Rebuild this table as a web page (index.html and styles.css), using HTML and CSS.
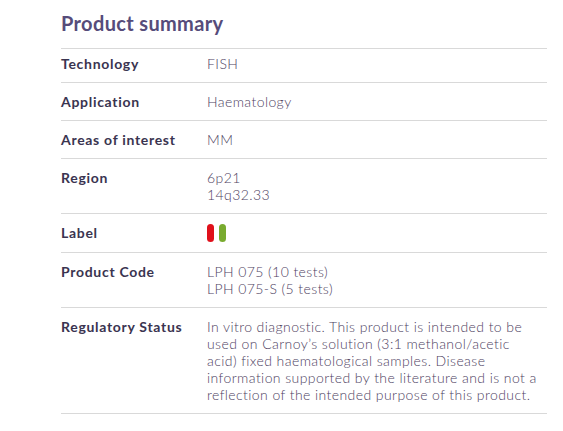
FILE: index.html
```html
<!DOCTYPE html>
<html>
<head>
<meta charset="utf-8">
<link rel="stylesheet" href="styles.css">
</head>
<body>
<section class="summary">
  <h2 class="title">Product summary</h2>
  <div class="table">
    <div class="row first">
      <div class="key">Technology</div>
      <div class="val">FISH</div>
    </div>
    <div class="row">
      <div class="key">Application</div>
      <div class="val">Haematology</div>
    </div>
    <div class="row">
      <div class="key">Areas of interest</div>
      <div class="val">MM</div>
    </div>
    <div class="row">
      <div class="key">Region</div>
      <div class="val">6p21<br>14q32.33</div>
    </div>
    <div class="row">
      <div class="key">Label</div>
      <div class="val pills"><span class="pill red"></span><span class="pill green"></span></div>
    </div>
    <div class="row">
      <div class="key">Product Code</div>
      <div class="val">LPH 075 (10 tests)<br>LPH 075-S (5 tests)</div>
    </div>
    <div class="row">
      <div class="key">Regulatory Status</div>
      <div class="val">In vitro diagnostic. This product is intended to be<br>used on Carnoy’s solution (3:1 methanol/acetic<br>acid) fixed haematological samples. Disease<br>information supported by the literature and is not a<br>reflection of the intended purpose of this product.</div>
    </div>
  </div>
</section>
</body>
</html>
```
FILE: styles.css
```css
html, body {
  margin: 0;
  padding: 0;
  background: #ffffff;
}
body {
  font-family: "Lato", "Open Sans", sans-serif;
}
.summary {
  margin-left: 61px;
  width: 486px;
  padding-top: 10px;
}
.title {
  margin: 0;
  font-size: 20px;
  font-weight: 700;
  letter-spacing: 0.35px;
  color: #564c7a;
  line-height: 26px;
  padding-bottom: 12px;
  border-bottom: 1px solid #d9d9d9;
}
.row {
  display: grid;
  grid-template-columns: 146px 1fr;
  padding: 10px 0 10px;
  border-bottom: 1px solid #d9d9d9;
  font-size: 14px;
  line-height: 17px;
}
.row.first {
  padding-top: 6px;
}
.key {
  font-weight: 700;
  letter-spacing: 0.7px;
  color: #3a3450;
}
.val {
  font-weight: 300;
  letter-spacing: 0.42px;
  color: #4e4262;
}
.pills {
  display: flex;
  gap: 5px;
  align-items: center;
}
.pill {
  display: block;
  width: 7px;
  height: 18px;
  border-radius: 4px;
}
.red { background: #e0101b; }
.green { background: #79ab2f; }
```
